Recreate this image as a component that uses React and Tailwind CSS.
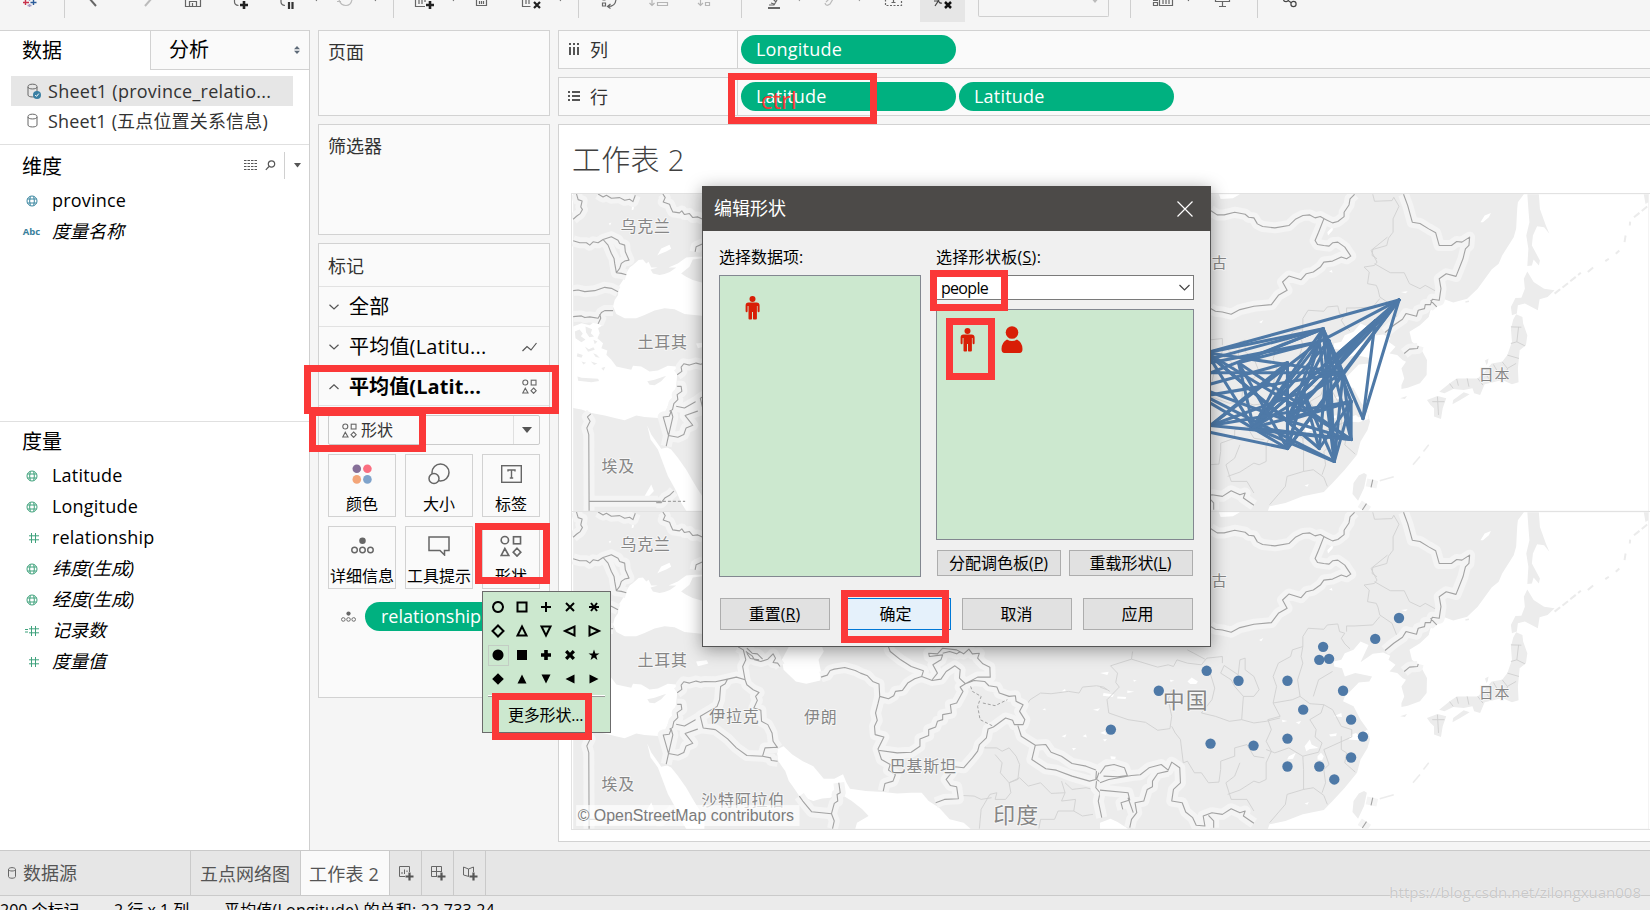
import React from "react";

const RED = "border-[7px] border-[#fb3838]";

const Globe = ({ color }) => (
  <svg width="12" height="12" viewBox="0 0 12 12" fill="none" stroke={color} strokeWidth="1">
    <circle cx="6" cy="6" r="5" />
    <path d="M1.5 4h9M1.5 8h9M4.3 1.5Q3 6 4.3 10.5M7.7 1.5Q9 6 7.7 10.5" />
  </svg>
);

const Hash = ({ eq }) => (
  <svg width="14" height="12" viewBox="0 0 14 12" fill="none" stroke="#3fa27c" strokeWidth="1">
    <path d="M6.5 1v10M10.5 1v10M4 3.8h10M4 7.8h10" />
    {eq && <path d="M0 4.5h3M0 7h3" />}
  </svg>
);

const Cylinder = ({ checked }) => (
  <svg width="15" height="17" viewBox="0 0 15 17" fill="none" stroke="#666" strokeWidth="1">
    <path d="M1 3.5C1 .4 10 .4 10 3.5V12c0 2.6-9 2.6-9 0zM1 4c0 2.6 9 2.6 9 0" />
    {checked && (
      <>
        <circle cx="10" cy="12" r="4" fill="#3a7fa3" stroke="none" />
        <path d="M8.2 12l1.3 1.4 2.3-2.8" stroke="#fff" />
      </>
    )}
  </svg>
);

const ShapesIcon = ({ size = 15 }) => (
  <svg width={size} height={size} viewBox="0 0 15 15" fill="none" stroke="#666" strokeWidth="1.1">
    <circle cx="3.3" cy="3.5" r="2.5" />
    <rect x="9.2" y="1.2" width="4.8" height="4.8" />
    <path d="M3.3 9.2L6 14H.8zM11.6 9l2.6 2.7-2.6 2.7L9 11.7z" />
  </svg>
);

const DetailIcon = ({ size = 23 }) => (
  <svg width={size} height={size * 0.75} viewBox="0 0 24 18" fill="none" stroke="#666" strokeWidth="1.5">
    <circle cx="12" cy="4" r="3.4" fill="#666" stroke="none" />
    <circle cx="3.7" cy="13.5" r="2.9" />
    <circle cx="12" cy="13.5" r="2.9" />
    <circle cx="20.3" cy="13.5" r="2.9" />
  </svg>
);

const Caret = ({ up }) => (
  <svg width="10" height="6" viewBox="0 0 10 6" fill="none" stroke="#555" strokeWidth="1.2">
    <path d={up ? "M.5 5L5 .8 9.5 5" : "M.5 .8L5 5 9.5 .8"} />
  </svg>
);

const Person = () => (
  <svg width="15" height="24" viewBox="0 0 15 24" fill="#d81e06">
    <circle cx="7.5" cy="3" r="3" />
    <path d="M3.5 6.6h8Q14.6 6.6 14.6 9.5V15q0 1.2-1 1.2t-1-1.2v-5h-.7v12.6q0 .9-1 .9H8.7q-.7 0-.7-.8V16H7v6.700q0 .8-.7.8H4.500q-1 0-1-.9V10h-.9v5q0 1.200-1 1.200T.6 15V9.500Q.6 6.600 3.500 6.600z" />
  </svg>
);

/* ---------- toolbar ---------- */

const Toolbar = () => (
  <div className="flex h-[30px] shrink-0 items-start bg-[#f5f5f5]">
    <div className="h-[18px] w-[65px] border-r border-[#cfcfcf]">
      <svg width="64" height="18" fill="none" strokeWidth="1.4">
        <path d="M23 2.500h6M25.500 0v5" stroke="#c8324c" />
        <path d="M29.500 0v1M29.500 4v3M27.500 5.500h4" stroke="#a59ac2" />
        <path d="M30.500 2.500h6M33.500 0v5" stroke="#2c5c9a" />
      </svg>
    </div>
    <div className="h-[18px] w-[329px] border-r border-[#cfcfcf]">
      <svg width="328" height="18" viewBox="65 0 328 18" fill="none" stroke="#666" strokeWidth="1.2">
        <path d="M89-2l7 8" strokeWidth="2" />
        <path d="M145 6l7-8" strokeWidth="2" stroke="#bbb" />
        <path d="M185.500-8v14.500h15V-8M189.500 6V1.500h7V6M192.500 3v3" />
        <path d="M234.500-5v7q0 3 4 3.500M281-5v7q0 3 4 3.500" />
        <path d="M240 5h8M244 1v8" stroke="#222" strokeWidth="2.600" />
        <path d="M289 2v7M292.500 2v7" stroke="#333" strokeWidth="2.200" />
        <path d="M316 0l.8 1M375 0l.8 1" stroke="#777" />
        <path d="M337 1.500h4M339 0q2 5.500 7 5.500t6-6" stroke="#bbb" />
      </svg>
    </div>
    <div className="h-[18px] w-[185px] border-r border-[#cfcfcf]">
      <svg width="184" height="18" viewBox="394 0 184 18" fill="none" stroke="#666" strokeWidth="1.200">
        <path d="M415.500-5V6.500H425M419 0v4M422 0v4M425 0v2M476.500-5V5.500h10V-5M479.500 1v3M481.500 1v3M483.500 1v3M522.500-5V6.500h8M526 0v4M529 0v4" />
        <path d="M426 5h8M430 1v8" stroke="#222" strokeWidth="2.600" />
        <path d="M534 2l6 6M540 2l-6 6" stroke="#222" strokeWidth="2.200" />
        <path d="M453 0l.8 1M560 0l.8 1" stroke="#777" />
      </svg>
    </div>
    <div className="h-[18px] w-[163px] border-r border-[#cfcfcf]">
      <svg width="162" height="18" viewBox="579 0 162 18" fill="none" stroke="#666" strokeWidth="1.200">
        <path d="M602.500 3h3v3h-3zM602.500 0h3M608 6.500q8 0 8-8M610.500 4l-3 2.500 3 2" />
        <g stroke="#b5b5b5">
          <path d="M652-2v7M649.500 3l2.500 2.500L654.500 3M657-.5h8M657.500 2.500h10v3h-10zM700.500-2v7M698 3l2.500 2.500L703 3M705.500-.5h6M705.500 2.500h4v3h-4z" />
        </g>
      </svg>
    </div>
    <svg width="178" height="18" viewBox="742 0 178 18" fill="none" stroke="#666" strokeWidth="1.200">
      <path d="M768 8h12" strokeWidth="2" />
      <path d="M769 5h5l3-5M771 3l3 1M773-1l3 3" />
      <path d="M799 0l.8 1M859 0l.8 1" stroke="#999" />
      <path d="M825 3q1 4 5 1l3-5M826 2l4-4" stroke="#bbb" />
      <path d="M885.500-4v9.500h16V-4" strokeDasharray="2 1.500" />
      <path d="M893.500-3v5M891.500 2.500h4" />
    </svg>
    <div className="h-[22px] w-[45px] bg-[#e6e6e6]">
      <svg width="45" height="18" fill="none" stroke="#444" strokeWidth="1.200">
        <path d="M15 6l4-6M14 1h4M18-1q1 5 4 4" />
        <path d="M25 2l6 6M31 2l-6 6" stroke="#111" strokeWidth="2.500" />
      </svg>
    </div>
    <div className="ml-[13px] flex h-[17px] w-[131px] justify-end rounded-b-[2px] border border-t-0 border-[#cfcfcf]">
      <svg className="mr-[9px]" width="8" height="4" fill="#bbb"><path d="M1.500 0h5L4 3z" /></svg>
    </div>
    <div className="ml-[21px] h-[18px] w-[128px] border-x border-[#cfcfcf]">
      <svg width="126" height="18" viewBox="1131 0 126 18" fill="none" stroke="#666" strokeWidth="1.200">
        <path d="M1153.500 2.500h4v3h-4zM1153 .3h5M1159.500-3v8.500h13V-3M1163 0v4M1166 0v4M1169 0v4" />
        <path d="M1188 0l.8 1" />
        <path d="M1215.500-3v4.500h14V-3M1222.500 1.500v5M1219 6.500h7" />
      </svg>
    </div>
    <svg width="60" height="18" viewBox="1258 0 60 18" fill="none" stroke="#444" strokeWidth="1.200">
      <circle cx="1293.500" cy="4" r="2.600" /><circle cx="1286" cy="-1" r="2.600" />
      <path d="M1288 .5l3.300 2.200" />
    </svg>
  </div>
);

/* ---------- data pane ---------- */

const Field = ({ icon, children, italic }) => (
  <div className="flex h-[31px] items-center text-[18px] leading-[31px] text-black">
    <span className="flex w-[52px] shrink-0 items-center justify-center pl-[11px]">{icon}</span>
    <span className={italic ? "italic" : "tracking-[0.2px]"}>{children}</span>
  </div>
);

const DataPane = () => (
  <div className="flex w-[310px] shrink-0 flex-col border-r border-[#cfcfcf] bg-white">
    <div className="flex h-[40px] shrink-0 border-t border-[#d2d2d2] text-[20px] leading-[40px] text-black">
      <div className="w-[150px] pl-[22px]">数据</div>
      <div className="flex flex-1 items-center justify-between border-b border-l border-[#d2d2d2] bg-[#fafafa] pr-[9px] pl-[18px]">
        <span>分析</span>
        <svg width="6" height="8" viewBox="0 0 6 8" fill="#5e6a78"><path d="M0 3.200L3 0l3 3.200zM0 4.800L3 8l3-3.200z" /></svg>
      </div>
    </div>
    <div className="mt-[6px] ml-[11px] flex h-[30px] w-[282px] shrink-0 items-center bg-[#e6e6e6] pl-[16px] text-[18px] text-[#333]">
      <Cylinder checked /><span className="ml-[6px] leading-[30px] tracking-[0.26px] whitespace-pre">Sheet1 (province_relatio...</span>
    </div>
    <div className="ml-[11px] flex h-[31px] w-[290px] shrink-0 items-center pl-[16px] text-[18px] text-[#333]">
      <Cylinder /><span className="ml-[6px] leading-[31px] tracking-[0.16px] whitespace-pre">Sheet1 (五点位置关系信息)</span>
    </div>
    <div className="mt-[7px] flex h-[41px] shrink-0 items-center border-t border-[#e0e0e0] pl-[22px] text-black">
      <span className="flex-1 pt-[3px] text-[20px] leading-[38px]">维度</span>
      <svg width="13" height="10" viewBox="0 0 13 10" fill="none" stroke="#555" strokeWidth="1" strokeDasharray="2.500 1">
        <path d="M0 .5h13M0 3.500h13M0 6.500h13M0 9.500h13" />
      </svg>
      <svg className="ml-[8px]" width="11" height="11" viewBox="0 0 11 11" fill="none" stroke="#555" strokeWidth="1.200">
        <circle cx="6.500" cy="4" r="3.200" /><path d="M4 6.500L.8 9.800" />
      </svg>
      <div className="ml-[8px] h-[27px] w-px bg-[#d0d0d0]" />
      <svg className="mr-[8px] ml-[9px]" width="7" height="5" fill="#555"><path d="M0 0h7L3.500 4.500z" /></svg>
    </div>
    <Field icon={<Globe color="#3a86a0" />}>province</Field>
    <Field icon={<span className="text-[9.500px] font-bold text-[#3a7f9c]">Abc</span>} italic>度量名称</Field>
    <div className="mt-[174px] h-[39px] shrink-0 border-t border-[#e0e0e0] pl-[22px] text-[20px] leading-[39px] text-black">度量</div>
    <Field icon={<Globe color="#3fa27c" />}>Latitude</Field>
    <Field icon={<Globe color="#3fa27c" />}>Longitude</Field>
    <Field icon={<Hash />}>relationship</Field>
    <Field icon={<Globe color="#3fa27c" />} italic>纬度(生成)</Field>
    <Field icon={<Globe color="#3fa27c" />} italic>经度(生成)</Field>
    <Field icon={<Hash eq />} italic>记录数</Field>
    <Field icon={<Hash />} italic>度量值</Field>
  </div>
);

/* ---------- cards ---------- */

const Tile = ({ icon, label, last }) => (
  <div className={"flex h-[63px] flex-col items-center border border-[#d2d2d2] " + (last ? "w-[58px]" : "w-[68px]")}>
    <span className="flex h-[38px] items-center justify-center">{icon}</span>
    <span className="text-[16px] leading-[23px] whitespace-nowrap text-black">{label}</span>
  </div>
);

const MarksRow = ({ label, open, icon, bold }) => (
  <div className="flex h-[40px] items-center border-t border-[#e2e2e2] pr-[12px] pl-[10px] text-black">
    <Caret up={open} />
    <span className={"ml-[10px] flex-1 text-[20px] leading-[39px] whitespace-nowrap " + (bold ? "font-bold tracking-[0.1px]" : "tracking-[0.2px]")}>{label}</span>
    {icon}
  </div>
);

const Cards = () => (
  <div className="flex w-[248px] shrink-0 flex-col pl-[8px] text-[18px] text-[#333]">
    <div className="h-[86px] w-[232px] border border-[#d2d2d2] bg-[#fafafa] pl-[9px] leading-[42px]">页面</div>
    <div className="mt-[8px] h-[111px] w-[232px] border border-[#d2d2d2] bg-[#fafafa] pl-[9px] leading-[43px]">筛选器</div>
    <div className="mt-[8px] h-[455px] w-[232px] border border-[#d2d2d2] bg-[#fafafa]">
      <div className="h-[42px] pl-[9px] leading-[44px]">标记</div>
      <MarksRow label="全部" />
      <MarksRow
        label="平均值(Latitu..."
        icon={<svg width="15" height="10" viewBox="0 0 15 10" fill="none" stroke="#555" strokeWidth="1.200"><path d="M.5 9l4.500-4.500 4 3.500L14.500 1" /></svg>}
      />
      <MarksRow label="平均值(Latit..." open bold icon={<ShapesIcon />} />
      <div className="mt-[-1px] border-t border-[#e2e2e2] pl-[9px]">
        <div className="mt-[9px] flex h-[30px] w-[212px] items-center rounded-[2px] border border-[#cbcbcb] pl-[13px]">
          <ShapesIcon />
          <span className="ml-[4px] flex-1 text-[16px] leading-[28px]">形状</span>
          <div className="flex h-full w-[26px] items-center justify-center border-l border-[#e0e0e0]">
            <svg width="10" height="6" fill="#555"><path d="M0 0h10L5 6z" /></svg>
          </div>
        </div>
        <div className="mt-[9px] flex gap-[9px]">
          <Tile label="颜色" icon={<svg width="20" height="20"><circle cx="4.800" cy="4.800" r="4.300" fill="#866f98" /><circle cx="15.400" cy="4.800" r="4.300" fill="#fa6e80" /><circle cx="4.800" cy="15.400" r="4.300" fill="#f3a578" /><circle cx="15.400" cy="15.400" r="4.300" fill="#7fa3cb" /></svg>} />
          <Tile label="大小" icon={<svg width="22" height="22" fill="#fafafa" stroke="#666" strokeWidth="1.500"><circle cx="12.500" cy="9.500" r="8.500" /><circle cx="6" cy="15.500" r="5" /></svg>} />
          <Tile last label="标签" icon={<svg width="21" height="18" fill="none" stroke="#666" strokeWidth="1.400"><rect x=".7" y=".7" width="19.600" height="16.600" /><path d="M7 6.500V5h7v1.500M10.500 5v8M8.800 13h3.400" /></svg>} />
        </div>
        <div className="mt-[9px] flex gap-[9px]">
          <Tile label="详细信息" icon={<DetailIcon />} />
          <Tile label="工具提示" icon={<svg width="22" height="20" fill="none" stroke="#666" strokeWidth="1.500"><path d="M1 1h20v13.500h-4.500V19l-4.500-4.500H1z" /></svg>} />
          <Tile last label="形状" icon={<ShapesIcon size={22} />} />
        </div>
        <div className="mt-[13px] flex items-center pl-[13px]">
          <DetailIcon size={15} />
          <div className="ml-[9px] h-[29px] flex-1 rounded-l-full bg-[#00b180] pl-[16px] text-[18px] leading-[29px] text-white">relationship</div>
        </div>
      </div>
    </div>
  </div>
);

/* ---------- shelves ---------- */

const Pill = ({ children }) => (
  <div className="mr-[3px] h-[29px] w-[215px] rounded-full bg-[#00b180] pl-[15px] text-[18px] leading-[28px] tracking-[0.2px] text-white">{children}</div>
);

const Shelf = ({ icon, label, pills }) => (
  <div className="flex h-[39px] shrink-0 border border-r-0 border-[#d2d2d2] bg-[#fafafa]">
    <div className="flex w-[179px] items-center border-r border-[#d2d2d2] pl-[9px] text-[18px] text-[#333]">
      {icon}<span className="ml-[10px] pt-px leading-[38px]">{label}</span>
    </div>
    <div className="flex items-center pl-[3px]">{pills.map((p, i) => <Pill key={i}>{p}</Pill>)}</div>
  </div>
);

/* ---------- map ---------- */

const SX = 1568 / 550;

const SEA_WEST =
  "M195 278L205 262L215 255L232 240L245 238L255 250L262 245L270 262L290 262L268 268L275 280L295 285L310 282L326 276L345 262L322 262L350 250L375 232L400 230L430 230L430 234L395 238L385 260L360 280L375 290L395 300L430 310V408L400 405L370 402L340 388L310 385L280 392L250 405L225 415L190 415L165 402L155 380L160 360L170 345L172 320L185 300Z " +
  "M35 440L60 430L85 436L100 425L128 420L125 435L110 445L115 460L108 475L125 490L120 505L138 512L135 525L150 540L165 560L185 565L210 570L215 558L240 560L265 575L290 572L320 558L345 560L348 585L345 620L335 660L320 690L305 710L290 715L250 712L225 708L190 722L160 715L130 708L90 700L60 690L35 685Z " +
  "M258 738L270 765L295 800L300 808L318 804L330 810L350 835L375 870L395 905L410 930L430 960V994H375L360 970L345 935L320 890L305 850L290 810L268 780Z " +
  "M288 226L300 205L325 194L330 206L315 214L296 222Z M270 915L278 935L255 960L235 978L250 950Z M213 70L219 66L217 88L211 90Z M142 130l8-3l-4 9z";

const ISLES_WEST =
  "M48 590L60 594L110 597L113 604L90 608L50 603Z M258 605L280 600L315 588L300 605L280 617L265 615Z M40 455l14 -6l10 12l-6 8l14 10l-12 8l-18-12z M72 440l20 8l-4 12l10 10l-14 2l-10-14z M70 500l12 8l14-6l4 8l-20 6z M48 520l16 6l-4 8l-14-4z M95 520l10 4l10 10l-12-2z M60 545l14 4l-8 5z M88 545l20 6l-10 5z M120 565l12-4l-6 12z M96 480l12 5l-8 8z";

const BORDERS_WEST =
  "M45 41L50 58L62 62L58 80L63 88L56 100L45 108L35 117M110 41L125 50L135 45L150 54L175 52L190 60L205 57L215 64L222 45M305 41L312 52L306 65L325 72L330 85L335 95L355 98L362 92L370 103L385 100L395 112L410 110L427 118" +
  "M35 182L55 188L75 188L85 195L95 185L110 188L125 178L150 170L170 180L175 190L190 195L192 215L203 240L190 243L180 250L175 265L165 278M125 178L140 195L150 220L158 235L160 250L165 278L180 280L195 284M427 190L405 200L402 215" +
  "M35 332L50 330L70 335L100 332L130 322L150 325L170 335M35 410L60 408L70 413L85 411L110 415L120 398L130 392L155 392M115 402L118 415L110 432M348 585L362 575L360 562L368 552L385 556L405 550L427 556" +
  "M348 620L360 620L362 635L348 645L350 660L338 672L334 690L325 695M345 680L370 685L427 653M418 660L422 690L372 708L395 737L375 745L368 765L350 773L322 768L306 712L324 710L330 695L335 712L322 768L315 800M88 703L78 712L86 725L76 745L82 765L83 994M83 966L290 966M285 970L300 970L312 955L325 948L338 935";

const SEA_MID =
  "M650 441L640 460L630 480L635 510L655 530L670 545L700 552L740 542L742 515L735 480L750 455L745 441Z " +
  "M615 750L635 740L660 765L690 785L720 800L750 838L780 838L805 824L815 850L825 868L870 875L920 878L960 882L1000 880L1030 880L1050 905L1080 925L1110 960L1150 970L1170 988H840L845 970L878 950L860 930L830 905L805 888L795 865L785 880L770 895L745 897L720 905L695 895L680 890L662 862L650 845L640 815L620 785Z";

const BORDERS_MID =
  "M505 441L520 450L527 480L518 500L525 540M527 455L545 468L552 480L570 485L590 478L605 462L612 475L605 488L618 490L625 500M530 445L545 460L560 462L575 478M530 460L540 476L565 480" +
  "M399 547L410 545L440 546L475 538L500 532L525 540L530 555L548 570L565 578L555 590L560 602L550 625L570 632L572 665L590 675L602 700L605 725L618 745M475 538L468 552L455 560L452 600L445 620L397 650L405 685L440 690L475 718L500 745L530 768L575 770L582 745L618 743M575 770L598 775L600 783L618 785" +
  "M742 532L760 526L768 512L780 508L810 503L840 512L855 520L875 528L890 545L908 553L910 590L905 612L898 640L903 662L895 680L897 705L922 712L905 748L915 780L940 795L935 812L955 825L948 845L925 852L920 875" +
  "M910 590L935 597L950 588L955 575L975 572L990 550L1010 537L1030 530L1060 542L1085 538L1100 515L1125 498L1140 510L1138 535L1155 552L1140 562L1148 575L1130 610L1112 615L1115 640L1090 645L1090 660L1075 665L1070 682L1050 690L1050 708L1025 718L1025 740L1000 758L960 760L905 752M935 441L940 455L970 480L1000 500L1035 513L1030 530M1060 540L1075 520L1062 495L1085 480L1090 465L1052 470L1050 460L1075 462L1090 445L1130 450L1150 462L1165 448L1175 462L1195 460L1190 475L1205 492L1225 502L1226 532L1190 532L1155 552M1090 460L1110 455L1130 462L1140 455" +
  "M1155 552L1180 542L1210 545L1222 558L1245 562L1252 580L1280 590L1298 588L1300 605L1320 615L1310 635L1325 660L1320 675L1295 675L1290 662L1270 655L1235 682L1220 688L1215 715L1195 735L1190 755L1175 775L1150 805L1125 802L1115 820L1100 840L1112 858L1130 862L1135 898L1095 900L1070 910" +
  "M1305 678L1315 710L1355 737L1385 735L1400 758L1430 770L1460 792L1500 800L1530 812L1528 840L1510 845L1460 830L1415 812L1385 808L1345 780L1355 737M1530 840L1540 810L1560 795L1568 797M1530 840L1550 852L1568 850M1530 845L1528 865L1540 880L1535 905L1545 955M680 890L690 905L715 937L772 943L780 965L775 988M772 943L780 912L790 905L788 885L797 880L793 850";

const LIGHT_MID =
  "M1310 645L1340 600L1370 580L1400 582L1450 575L1480 580L1490 562L1530 558L1550 562L1568 575M1215 720L1210 745L1245 745L1260 755L1280 745L1300 770L1310 795L1305 840L1280 850L1285 880L1270 900L1240 900L1245 880L1225 885L1200 930L1195 988M1140 888L1180 890L1200 900L1230 895M1280 850L1310 835L1335 860L1370 850L1400 882L1440 880L1430 845M1440 850L1460 870L1500 865L1540 875L1568 870M1440 880L1430 905L1470 900L1465 935L1420 935L1410 960L1370 960L1365 988M1240 765L1260 790L1255 820L1280 850M1465 935L1490 950L1520 945";

const SEA_EAST =
  "M1212 36L1195 60L1193 80L1190 140L1183 165L1150 220L1140 245L1120 262L1080 320L1050 350L1010 362L985 352L978 365L945 385L940 405L915 430L885 450L892 480L920 505L935 535L934 580L915 605L880 618L862 622L862 610L870 590L862 560L875 540L865 535L850 520L828 515L845 495L825 480L830 468L810 458L780 462L745 487L755 465L768 435L745 425L725 450L700 460L690 480L668 485L670 500L692 505L700 530L730 520L778 530L770 545L740 548L715 575L700 590L695 605L725 620L745 660L765 690L772 720L765 745L745 780L735 820L700 865L665 905L640 932L580 945L530 965L485 975L480 988H1568V36Z " +
  "M340 36L400 36L380 48L345 50Z M650 150L668 130L665 145L652 160Z M1088 120L1100 100L1118 92L1112 105L1095 120Z M0 970L30 958L50 968L80 988H0Z";

const LAND_EAST =
  "M1222 36L1255 36L1258 80L1275 130L1285 155L1270 135L1250 132L1238 160L1235 190L1258 235L1255 250L1240 232L1235 250L1222 252L1225 200L1219 160L1228 120L1225 80Z " +
  "M1222 268L1240 300L1270 320L1300 325L1280 345L1257 352L1252 385L1215 365L1195 370L1192 395L1178 400L1175 375L1188 348L1205 347L1215 320L1212 290Z " +
  "M1182 412L1190 397L1208 405L1210 425L1222 460L1218 490L1200 505L1195 560L1197 602L1178 608L1150 595L1130 600L1100 608L1087 640L1070 635L1065 620L1040 625L1010 622L985 635L970 630L1000 605L1020 590L1080 590L1100 570L1120 545L1150 540L1165 520L1178 480L1175 440Z " +
  "M1010 655L1040 632L1057 638L1030 655L1008 668Z M935 655L965 643L990 650L980 680L975 712L955 705L955 680L945 670Z " +
  "M755 875L763 880L755 920L738 958L722 938L725 905L740 882Z M858 650L878 643L872 652ZM1555 36H1568V60L1560 65ZM1105 550l-4-14l10-6l-2 14z";

const BORDERS_EAST =
  "M316 85L335 98L355 98L385 90L415 96L425 105L440 107L450 125L465 133L500 137L540 130L560 110L580 100L600 98L615 107L630 103L645 112L665 122L680 118L698 103L698 90L712 68L715 50L728 36M640 110L625 150L615 175L622 187L640 190L655 192L665 182L680 180L700 195L717 222L705 230L690 225L665 237L640 240L630 255L610 270L590 275L575 293L540 282L522 300L535 325L510 340L490 368L440 373L400 383L375 397L350 390L330 388L316 380" +
  "M868 36L880 70L893 120L915 124L940 140L960 152L970 190L1005 190L1020 178L1035 180L1057 165L1055 190L1045 200L1038 230L1018 283L990 275L970 290L975 320L970 355L950 352L945 368L930 368L928 380L910 385L905 403L875 395L865 412L840 430L815 452M945 355L963 375M870 515L885 502L908 500L910 492" +
  "M0 822L15 800L40 795L70 805L78 828L50 832L10 830M0 850L25 840L90 828L115 826L140 805L175 795L195 812L205 788L228 805L230 850L210 870L205 905L235 910L245 938L265 955L275 978L300 980L295 950L320 940L350 945L375 928L400 940L415 935L410 950L440 972M195 815L165 822L150 845L150 862L135 870L125 905L100 910L105 940L90 960L85 985M0 872L80 880L85 902L60 910L65 930M80 895L95 940M310 948L325 965L325 985M780 895L775 918M762 967L750 986";

const LIGHT_EAST =
  "M780 36L785 57L835 55L840 45L855 72L838 110L838 150L825 168L820 190L780 202L778 220L792 230M822 165L775 205L792 240L785 250L755 255L770 270L765 305L790 310L795 322L800 345L835 370L850 410M785 245L830 272L870 272L885 305L915 320L930 310L965 330" +
  "M580 440L580 410L595 385L640 388L650 375L680 372L685 395L700 400L690 415L700 432L715 447M705 395L705 378L730 378L780 375L800 350M580 440L550 450L545 470L510 490L495 530L505 560L495 610L550 600L572 590L565 540L580 490L575 470L580 440M495 610L515 650L480 660L490 690L475 725L490 755L475 790L475 840L455 850L440 845L400 872L365 885" +
  "M572 590L600 612L640 615L632 640L600 660L618 690L615 712L635 730L625 758L580 770L540 745L500 760L475 750M580 770L582 810L582 870L535 885L530 915L485 970M582 870L610 865L640 888L650 915M640 615L665 630L690 680L720 690L720 712L640 750L655 795L640 810L645 850L635 880M690 710L690 750L705 760L700 790L730 818M610 590L625 540L665 515" +
  "M0 562L20 570M45 548L50 520L30 498L90 478L165 502L195 495L210 500L220 480L250 490L290 495L305 475L350 470L350 490M90 478L93 455M45 548L55 562L20 600L25 640L80 660L130 668L165 692L200 687L205 650L195 600L205 570M250 450L300 478M315 520L328 565L320 600L290 640L330 650L370 665L405 660L410 590L385 560L375 540L345 520L355 497L395 525L400 480L415 475L415 510L440 530L455 570L440 590L410 590" +
  "M205 680L215 700L230 720L238 790M238 790L250 785L270 820L290 820L310 850L340 848L345 810L345 785L385 770L385 745L420 735L440 770L470 775M405 660L440 670L475 665L515 655M360 850L375 900L420 900L440 935M360 850L385 830L400 790";

const MIST =
  "M10 580l30 4l-4 8l-28-4zM50 590l25 2l-2 6l-24-2zM78 572l20 4l-20 4zM200 540l12 2l-10 5zM250 545L262 533L280 545L275 553L258 553ZM30 770l15 2l-2 8l-12-2zM540 770L560 760L552 778L535 780ZM585 740L600 720L605 735L625 745L600 748L590 755ZM622 770L632 760L640 770L635 782L622 780ZM655 705l22-4l-2 8l-16 2zM520 660l16 4l-14 4zM560 668l15-4l-6 10zM668 650L690 640L692 652ZM860 330l20-2l-6 6zM400 105l10-4l-4 8zM655 268l8-4l2 8zM585 912l12-4l-4 8zM0 520l25-4l-4 10zM95 540l10 2l-8 4zM455 420l12-6l-6 10zM710 720L720 705L732 700L740 708L765 690L768 712L740 722Z";

const PTS = [
  [31, 690], [168, 573], [305, 513], [396, 543], [316, 732], [439, 738], [536, 543], [536, 717], [536, 801],
  [581, 630], [627, 801], [627, 480], [655, 477], [638, 441], [695, 573], [718, 660], [752, 711], [718, 774],
  [670, 840], [787, 417], [855, 354],
].map(([u, v]) => [1100 + u / SX - 571.5, v / 3 - 11.7]);

const EDGES = [
  [20, 2], [20, 11], [20, 7], [20, 9], [20, 5], [20, 16], [20, 14], [20, 8], [19, 16], [19, 7], [19, 9], [19, 5],
  [13, 1], [13, 2], [13, 0], [13, 3], [13, 5], [13, 7], [13, 8], [13, 17], [13, 14], [13, 15], [13, 18],
  [11, 1], [11, 3], [11, 4], [11, 5], [11, 18], [12, 10], [12, 5], [12, 18], [12, 7], [12, 16],
  [2, 14], [1, 14], [2, 10], [2, 7], [1, 8], [0, 8], [0, 14], [1, 7], [1, 18], [4, 15], [4, 6], [4, 9], [5, 15],
  [8, 6], [8, 14], [8, 9], [17, 5], [17, 3], [17, 7], [18, 5], [18, 14], [18, 15], [18, 9], [17, 15], [17, 14],
  [10, 15], [10, 9], [3, 8], [3, 5], [2, 5], [2, 17], [6, 5], [5, 14], [7, 15], [0, 6], [4, 17],
];

const LABELS = [
  ["乌克兰", 619, 550, 16], ["土耳其", 636, 666, 16], ["埃及", 600, 791, 16], ["伊拉克", 708, 722, 16],
  ["伊朗", 803, 723, 16], ["巴基斯坦", 889, 773, 16], ["沙特阿拉伯", 700, 807, 16], ["印度", 993, 824, 22],
  ["中国", 1163, 708, 22], ["古", 1212, 586, 15], ["日本", 1480, 698, 15],
];

const Lines = ({ d }) => (
  <>
    <path d={d} stroke="#f4f4f4" strokeWidth="11" vectorEffect="non-scaling-stroke" />
    <path d={d} stroke="#a2a2a2" strokeWidth="1.100" vectorEffect="non-scaling-stroke" />
  </>
);

const WEST = "translate(-11.700 -13.700) scale(.33333)";
const MID = "translate(-11.700 -11.700) scale(.35077 .33333)";
const EAST = "translate(528.500 -11.700) scale(.35077 .33333)";

const MapPane = ({ children }) => (
  <svg className="block shrink-0 border-t border-l border-[#e2e2e2]" width="1079" height="318" viewBox="0 0 1079 318" fill="none" strokeLinejoin="round">
    <rect width="1079" height="318" fill="#ececec" />
    <g fill="#fff">
      <path transform={MID} d={SEA_MID} />
      <path transform={WEST} d={SEA_WEST} />
      <path transform={EAST} d={SEA_EAST} />
    </g>
    <path transform={WEST} d={ISLES_WEST} fill="#ececec" />
    <path transform={EAST} d={LAND_EAST} fill="#ececec" />
    <path transform={EAST} d={MIST} fill="#fff" />
    <path transform={MID} d="M1430 710l14-6l-4 10zM1460 745l12 0l-8 8zM1490 710l10-6l2 10zM1540 700l14-6l4 12zM1375 630l8-4l2 6zM1430 575l10-8l2 8zM1520 630l20-4l-6 8zM385 485l30-4l5 10l-30 8zM1548 720l12-2l-6 8z" fill="#fff" />
    <g transform={EAST}>
      <path d="M1300 335L1340 302L1375 272M1395 270L1415 252M1445 237L1455 230M1475 215L1485 205M1500 180L1503 160M1515 130L1516 118M1527 105L1545 90L1568 70" stroke="#ebebeb" strokeWidth="2" strokeDasharray="7 3" vectorEffect="non-scaling-stroke" />
      <path d="M895 850L915 825M925 810L940 790M800 898L840 886M1045 360l10-2" stroke="#ececec" strokeWidth="1.500" vectorEffect="non-scaling-stroke" />
      <path d={LIGHT_EAST} stroke="#d0d0d0" strokeWidth=".9" vectorEffect="non-scaling-stroke" />
      <path d="M1175 435L1205 436M1197 435L1192 480L1175 485M1192 480L1215 492M1165 520L1198 530M1150 540L1165 560L1190 545M1165 560L1160 590M1125 548L1140 575L1165 575M1100 575L1120 600M1080 590L1095 610M1050 590L1055 615M1020 592L1025 612M1000 606L1010 620M950 660L985 660M965 645L968 700" stroke="#cfcfcf" strokeWidth=".9" vectorEffect="non-scaling-stroke" />
    </g>
    <g transform={MID}><path d={LIGHT_MID} stroke="#d0d0d0" strokeWidth=".9" vectorEffect="non-scaling-stroke" /></g>
    <g transform={WEST}>
      <Lines d={BORDERS_WEST} />
      <path d="M290 966H372" stroke="#a2a2a2" strokeWidth="1.100" strokeDasharray="3 2" vectorEffect="non-scaling-stroke" />
    </g>
    <g transform={MID}>
      <Lines d={BORDERS_MID} />
      <path d="M1170 560L1175 575L1200 590L1190 620L1197 660L1235 680M1205 610L1240 618L1275 600" stroke="#a2a2a2" strokeWidth="1" strokeDasharray="3 2" vectorEffect="non-scaling-stroke" />
    </g>
    <g transform={EAST}><Lines d={BORDERS_EAST} /></g>
    {LABELS.map(([t, x, y, s]) => (
      <text key={t} x={x - 571.5} y={y - 511.700} fontSize={s} letterSpacing={s > 20 ? 1 : 0.8} fill="#868686" stroke="#f6f6f6" strokeWidth="2" paintOrder="stroke">{t}</text>
    ))}
    {children}
  </svg>
);

const Worksheet = () => (
  <div className="mt-[8px] flex h-[718px] shrink-0 flex-col border border-r-0 border-[#d2d2d2] bg-white pl-[12px]">
    <div className="h-[68px] shrink-0 pl-px text-[29px] leading-[70px] font-light tracking-[0.3px] text-[#404040]">工作表 2</div>
    <MapPane>
      <g stroke="#4e79a7" strokeWidth="3.100" strokeLinecap="round">
        {EDGES.map(([a, b], i) => <line key={i} x1={PTS[a][0]} y1={PTS[a][1]} x2={PTS[b][0]} y2={PTS[b][1]} />)}
      </g>
    </MapPane>
    <MapPane>
      {PTS.map(([x, y], i) => <circle key={i} cx={x} cy={y} r="5.200" fill="#4e79a7" />)}
      <rect x="3" y="294" width="224" height="21" fill="#fff" fillOpacity=".7" />
      <text x="4.500" y="310" fontSize="16" fill="#7b7b7b" fontFamily="Liberation Sans, sans-serif" textLength="217">© OpenStreetMap contributors</text>
    </MapPane>
    <div className="h-px shrink-0 bg-[#e2e2e2]" />
  </div>
);

/* ---------- bottom ---------- */

const AddTab = ({ children }) => (
  <div className="flex w-[32px] items-center justify-center border-r border-[#cacaca]">
    <svg width="16" height="16" viewBox="0 0 16 16" fill="none" stroke="#666" strokeWidth="1">
      {children}
      <path d="M7.500 11.500h8M11.500 7.500v8" stroke="#555" strokeWidth="2.200" />
    </svg>
  </div>
);

const Bottom = () => (
  <>
    <div className="flex h-[46px] shrink-0 border-y border-[#cacaca] bg-[#e6e6e6] text-[18px] leading-[46px] text-[#555]">
      <div className="flex w-[191px] items-center border-r border-[#cacaca] pl-[8px]">
        <svg width="8" height="12" viewBox="0 0 8 12" fill="none" stroke="#666"><path d="M.5 2.500C.5 0 7.500 0 7.500 2.500v7c0 2.300-7 2.300-7 0zM.5 2.500c0 2 7 2 7 0" /></svg>
        <span className="ml-[7px]">数据源</span>
      </div>
      <div className="w-[110px] border-r border-[#cacaca] pl-[9px]">五点网络图</div>
      <div className="w-[89px] border-r border-[#cacaca] bg-[#fafafa] pl-[8px] tracking-[0.2px]">工作表 2</div>
      <AddTab><path d="M7 11.500H1.500v-10h10V7M4 9V7M6.500 9V4.500M9 7V5.500" /></AddTab>
      <AddTab><path d="M7 11.500H1.500v-10h10V7M1.500 6.500h10M6.500 1.500v10" /></AddTab>
      <AddTab><path d="M7 11.500L1.500 10V2l5 2 5-2v5M6.500 4v7" /></AddTab>
    </div>
    <div className="flex h-[14px] shrink-0 overflow-hidden bg-[#ebebeb] text-[16px] leading-[29px] whitespace-pre text-black">
      <span className="w-[114px]">200 个标记</span>
      <span className="w-[110px]">2 行 x 1 列</span>
      <span className="tracking-[0.2px]">平均值(Longitude) 的总和: 22,733.24</span>
    </div>
  </>
);

/* ---------- shape popup ---------- */

const GLYPHS = [
  ["M0-5A5 5 0 1 0 .01-5z", 0], ["M-4.500-4.500h9v9h-9z", 0], ["M-5 0H5M0-5V5", 0], ["M-4-4L4 4M4-4L-4 4", 0], ["M-5 0H5M-3-4L3 4M3-4L-3 4", 0],
  ["M0-5.500L5.500 0 0 5.500-5.500 0z", 0], ["M0-4.500L4.500 4.500h-9z", 0], ["M0 4.500L4.500-4.500h-9z", 0], ["M-5 0L4.500-4.500v9z", 0], ["M5 0L-4.500-4.500v9z", 0],
  ["M0-5.500A5.500 5.500 0 1 0 .01-5.500z", 1], ["M-5-5H5V5H-5z", 1], ["M-1.800-5h3.600v3.200H5v3.600H1.800V5h-3.600V1.800H-5v-3.600h3.200z", 1], ["M-5-2.700L-2.700-5 0-2.300 2.700-5 5-2.700 2.300 0 5 2.700 2.700 5 0 2.300-2.700 5-5 2.700-2.300 0z", 1], ["M0-5.500L1.400-1.600H5.500L2.200.8 3.400 5 0 2.500-3.400 5-2.200.8-5.500-1.600H-1.400z", 1],
  ["M0-5.800L5.800 0 0 5.800-5.800 0z", 1], ["M0-4.500L4.500 4.500h-9z", 1], ["M0 4.500L4.500-4.500h-9z", 1], ["M-4.500 0L4.500-4.500v9z", 1], ["M4.500 0L-4.500-4.500v9z", 1],
];

const ShapePopup = () => (
  <div className="absolute top-[591px] left-[482px] h-[142px] w-[129px] border border-[#6b6b6b] bg-[#cce8cf]">
    <div className="mt-[3px] ml-[3px] grid grid-cols-[repeat(5,24px)]">
      {GLYPHS.map(([d, solid], i) => (
        <svg key={i} width="24" height="24" viewBox="-12 -12 24 24" fill={solid ? "#000" : "none"} stroke={solid ? "none" : "#000"} strokeWidth="2">
          {i === 10 && <rect x="-9.500" y="-9.500" width="20" height="20" fill="none" stroke="#c3cdc4" strokeWidth="1" />}
          <path d={d} />
        </svg>
      ))}
    </div>
    <div className="mx-[5px] mt-[4px] h-[2px] border-t border-b border-t-white border-b-[#9a9a9a]" />
    <div className="pl-[25px] text-[16px] leading-[37px] tracking-[-0.2px] whitespace-nowrap text-black">更多形状...</div>
  </div>
);

/* ---------- dialog ---------- */

const Btn = ({ className, children }) => (
  <div className={"flex items-center justify-center border pr-px text-[16px] leading-[24px] text-black " + className}>
    <span className="whitespace-nowrap">{children}</span>
  </div>
);

const GREY = "border-[#adadad] bg-[#e1e1e1]";

const Dialog = () => (
  <div className="absolute top-[186px] left-[702px] flex h-[461px] w-[509px] flex-col border border-[#555] bg-[#f0f0f0] text-[16px] text-black shadow-[0_3px_16px_rgba(0,0,0,0.38)]">
    <div className="mx-[-1px] mt-[-1px] flex h-[45px] shrink-0 items-center justify-between bg-[#4c4a48] pr-[18px] pl-[12px] text-[18px] text-white">
      <span>编辑形状</span>
      <svg width="16" height="16" stroke="#fff" strokeWidth="1.200"><path d="M.5 .5l15 15M15.500 .5l-15 15" /></svg>
    </div>
    <div className="flex pl-[16px]">
      <div className="w-[217px]">
        <div className="h-[44px] pt-[10px] leading-[32px]">选择数据项:</div>
        <div className="h-[302px] w-[202px] border border-[#828790] bg-[#cce8cf] pt-[20px] pl-[25px]"><Person /></div>
      </div>
      <div className="w-[258px]">
        <div className="h-[44px] pt-[10px] leading-[32px] tracking-[0.3px]">选择形状板(<u>S</u>):</div>
        <div className="flex h-[25px] items-center justify-between border border-[#7a7a7a] bg-white pr-[3px] pl-[4px]">
          <span className="pt-px leading-[23px] tracking-[-0.700px]">people</span>
          <svg width="11" height="7" fill="none" stroke="#444" strokeWidth="1.200"><path d="M.5 1l5 5 5-5" /></svg>
        </div>
        <div className="mt-[9px] flex h-[231px] gap-[26px] border border-[#828790] bg-[#cce8cf] pt-[16px] pl-[23px]">
          <div className="pt-[2px]"><Person /></div>
          <svg width="22" height="28" viewBox="0 0 22 28" fill="#d81e06">
            <circle cx="11" cy="6.500" r="6.300" />
            <path d="M6 13.500q5 3 10 0 5.500 3 5.500 9.500 0 4-3 4H3.500q-3 0-3-4 0-6.500 5.500-9.500z" />
          </svg>
        </div>
        <div className="mt-[10px] ml-px flex gap-[8px]">
          <Btn className={"h-[26px] w-[124px] " + GREY}>分配调色板(<u>P</u>)</Btn>
          <Btn className={"h-[26px] w-[124px] " + GREY}>重载形状(<u>L</u>)</Btn>
        </div>
      </div>
    </div>
    <div className="mt-[21px] ml-[17px] flex gap-[11px]">
      <Btn className={"h-[32px] w-[110px] " + GREY}>重置(<u>R</u>)</Btn>
      <Btn className="h-[32px] w-[110px] border-[#0078d7] bg-[#e5f1fb]">确定</Btn>
      <Btn className={"h-[32px] w-[110px] " + GREY}>取消</Btn>
      <Btn className={"h-[32px] w-[110px] " + GREY}>应用</Btn>
    </div>
  </div>
);

export default function App() {
  return (
    <div className="relative flex h-[910px] w-[1650px] flex-col overflow-hidden bg-[#f5f5f5] font-['Open_Sans','Noto_Sans_CJK_SC',sans-serif]">
      <Toolbar />
      <div className="flex h-[820px] shrink-0">
        <DataPane />
        <Cards />
        <div className="flex w-[1092px] shrink-0 flex-col">
          <Shelf
            label="列"
            icon={<svg width="12" height="13" fill="#555"><path d="M1 0h2v2H1zM5 0h2v2H5zM9 0h2v2H9zM1 4h2v8H1zM5 4h2v8H5zM9 4h2v8H9z" /></svg>}
            pills={["Longitude"]}
          />
          <div className="h-[8px] shrink-0" />
          <Shelf
            label="行"
            icon={<svg width="12" height="13" fill="#555"><path d="M0 1h2v2H0zM0 5h2v2H0zM0 9h2v2H0zM4 1h8v2H4zM4 5h8v2H4zM4 9h8v2H4z" /></svg>}
            pills={["Latitude", "Latitude"]}
          />
          <Worksheet />
        </div>
      </div>
      <Bottom />

      <ShapePopup />
      <Dialog />

      {/* red annotations over the window */}
      <div className={"absolute top-[73px] left-[728px] h-[51px] w-[149px] " + RED} />
      <div className="absolute top-[85px] left-[761px] text-[24px] leading-[30px] text-[#fb3838]">ctrl</div>
      <div className={"absolute top-[365px] left-[304px] h-[49px] w-[255px] " + RED} />
      <div className={"absolute top-[409px] left-[309px] h-[43px] w-[117px] " + RED} />
      <div className={"absolute top-[523px] left-[475px] h-[61px] w-[75px] " + RED} />
      <div className={"absolute top-[693px] left-[492px] h-[47px] w-[100px] " + RED} />
      <div className={"absolute top-[270px] left-[930px] h-[41px] w-[78px] " + RED} />
      <div className={"absolute top-[318px] left-[946px] h-[62px] w-[49px] " + RED} />
      <div className={"absolute top-[590px] left-[841px] h-[53px] w-[108px] " + RED} />
      <div className="absolute right-[9px] bottom-[8px] font-['Open_Sans',sans-serif] text-[15px] leading-[20px] text-[#c8c8c8] [text-shadow:0_0_1px_#fff]">https://blog.csdn.net/zilongxuan008</div>
    </div>
  );
}
